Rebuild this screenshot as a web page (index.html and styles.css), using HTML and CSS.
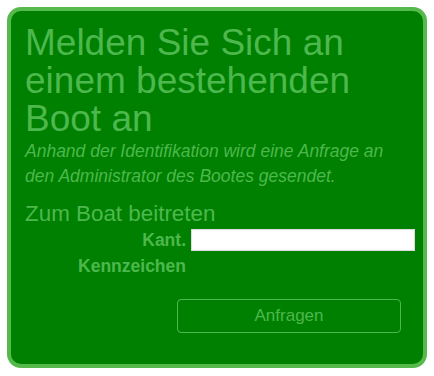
FILE: index.html
```html
<!DOCTYPE html>
<html lang="de">
<head>
  <meta charset="UTF-8" />
  <meta name="viewport" content="width=device-width, initial-scale=1.0" />
  <title>Boot beitreten</title>
  <link rel="stylesheet" href="styles.css">
</head>
<body>
  <div class="card">
    <h1>Melden Sie Sich an einem bestehenden Boot an</h1>
    <p class="hint">Anhand der Identifikation wird eine Anfrage an den Administrator des Bootes gesendet.</p>

    <h2>Zum Boat beitreten</h2>
    <div class="form-row">
      <label for="plate">Kant. Kennzeichen</label>
      <input type="text" id="plate" />
    </div>

    <button class="btn">Anfragen</button>
  </div>
</body>
</html>
```

FILE: styles.css
```css
body {
  margin: 7px;
  font-family: "Liberation Sans", Arial, sans-serif;
  background: #fff;
}
.card {
  box-sizing: border-box;
  height: 361px;
  background: #008000;
  border: 4px solid #55b94b;
  border-radius: 14px;
  padding: 13px 8px 10px 14px;
  color: #4db84d;
}
h1 {
  font-size: 37px;
  font-weight: normal;
  line-height: 38px;
  margin: 0;
}
.hint {
  font-style: italic;
  font-size: 17.5px;
  line-height: 25px;
  margin: 1px 0 0;
}
h2 {
  font-size: 22.4px;
  font-weight: normal;
  margin: 12px 0 0;
}
.form-row {
  display: flex;
  gap: 5px;
}
.form-row label {
  width: 161px;
  padding-left: 50px;
  box-sizing: border-box;
  text-align: right;
  font-weight: bold;
  font-size: 17.5px;
  line-height: 26px;
}
.form-row input {
  flex: 1;
  height: 22px;
  box-sizing: border-box;
  margin-top: 2px;
  border: 1px solid #ddd;
  background: #fff;
}
.btn {
  display: block;
  margin: 20px 0 0 152px;
  width: 224px;
  height: 34px;
  background: transparent;
  border: 1px solid #4db84d;
  border-radius: 4px;
  color: #4db84d;
  font-family: inherit;
  font-size: 17px;
}
```
